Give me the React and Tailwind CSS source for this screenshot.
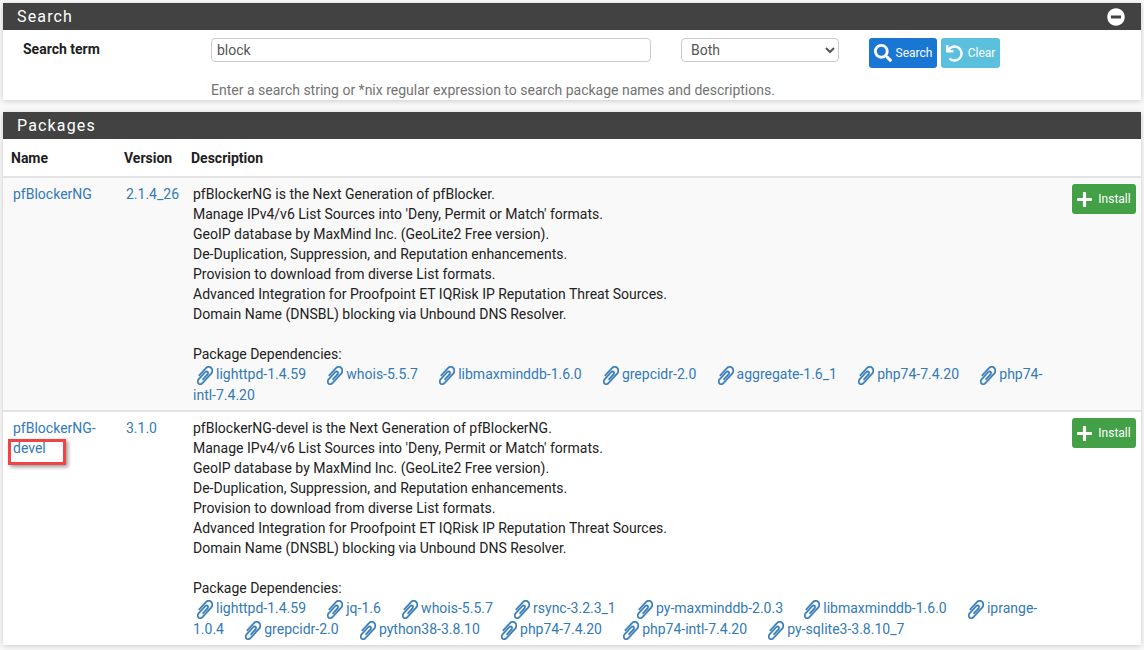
import { Fragment } from 'react';
import { FaMinusCircle, FaPlus, FaSearch, FaUndo } from 'react-icons/fa';

const descLines = (name, next) => [
  `${name} is the Next Generation of ${next}.`,
  "Manage IPv4/v6 List Sources into 'Deny, Permit or Match' formats.",
  'GeoIP database by MaxMind Inc. (GeoLite2 Free version).',
  'De-Duplication, Suppression, and Reputation enhancements.',
  'Provision to download from diverse List formats.',
  'Advanced Integration for Proofpoint ET IQRisk IP Reputation Threat Sources.',
  'Domain Name (DNSBL) blocking via Unbound DNS Resolver.',
];

const packages = [
  {
    name: 'pfBlockerNG',
    version: '2.1.4_26',
    desc: descLines('pfBlockerNG', 'pfBlocker'),
    deps: ['lighttpd-1.4.59', 'whois-5.5.7', 'libmaxminddb-1.6.0', 'grepcidr-2.0', 'aggregate-1.6_1', 'php74-7.4.20', 'php74-intl-7.4.20'],
    bg: 'bg-[#f9f9f9]',
  },
  {
    name: 'pfBlockerNG-devel',
    version: '3.1.0',
    desc: descLines('pfBlockerNG-devel', 'pfBlockerNG'),
    deps: ['lighttpd-1.4.59', 'jq-1.6', 'whois-5.5.7', 'rsync-3.2.3_1', 'py-maxminddb-2.0.3', 'libmaxminddb-1.6.0', 'iprange-1.0.4', 'grepcidr-2.0', 'python38-3.8.10', 'php74-7.4.20', 'php74-intl-7.4.20', 'py-sqlite3-3.8.10_7'],
    bg: 'bg-white',
  },
];

function Paperclip() {
  return (
    <svg viewBox="204 132 1392 1528" preserveAspectRatio="none" fill="currentColor" stroke="currentColor" strokeWidth="30" className="mb-[-1px] ml-[4px] mr-[3px] inline h-[19px] w-[16px] -scale-x-100">
      <path d="M1596 1385q0 117-79 196t-196 79q-135 0-235-100l-777-776q-113-115-113-271 0-159 110-270t269-111q158 0 273 113l605 606q10 10 10 22 0 16-30.5 46.5t-46.5 30.5q-13 0-23-10l-606-607q-79-77-181-77-106 0-179 75t-73 181q0 105 76 181l776 777q63 63 145 63 64 0 106-42t42-106q0-82-63-145l-581-581q-26-24-60-24-29 0-48 19t-19 48q0 32 25 59l410 410q10 10 10 22 0 16-31 47t-47 31q-12 0-22-10l-410-410q-63-61-63-149 0-82 57-139t139-57q88 0 149 63l581 581q100 98 100 235z" />
    </svg>
  );
}

function PanelHeading({ title, children }) {
  return (
    <div className="flex h-[27px] items-center justify-between bg-[#424242] pl-[14px] pr-[16px] text-[16px] leading-[27px] tracking-[1.15px] text-white">
      <span>{title}</span>
      {children}
    </div>
  );
}

function PackageRow({ pkg }) {
  return (
    <tr className={`${pkg.bg} border-b-2 border-[#e3e3e3] align-top last:border-b-0`}>
      <td className="pt-[6px] pl-[10px] pr-[8px]">
        <a className="text-[#337ab7]">{pkg.name}</a>
      </td>
      <td className="pt-[6px] pl-[2px]">
        <a className="text-[#337ab7]">{pkg.version}</a>
      </td>
      <td className="pt-[6px] pl-[2px] pr-[10px] pb-[4px]">
        {pkg.desc.map((line) => (
          <div key={line}>{line}</div>
        ))}
        <div className="mt-[20px]">Package Dependencies:</div>
        <div className="leading-[21px]">
          {pkg.deps.map((dep) => (
            <Fragment key={dep}>
              <a className="mr-[13.75px] text-[#337ab7]">
                <Paperclip />
                {dep}
              </a>{' '}
            </Fragment>
          ))}
        </div>
      </td>
      <td className="pt-[6px] pr-[5px]">
        <button className="ml-auto flex h-[30px] w-[64px] items-center justify-center gap-[5px] rounded-[3px] bg-[#43a047] pr-[1px] text-[12px] text-white">
          <FaPlus className="h-[17px] w-[17px]" />
          Install
        </button>
      </td>
    </tr>
  );
}

export default function App() {
  return (
    <div className="relative h-[650px] overflow-hidden bg-[#fafafa] px-[3px] pt-[3px] font-['Roboto',sans-serif] text-[14px] leading-[20px] text-[#212121]">
      <section className="h-[97px] bg-white shadow-[0_1px_6px_rgba(0,0,0,0.2)]">
        <PanelHeading title="Search">
          <FaMinusCircle className="h-[18px] w-[18px]" />
        </PanelHeading>
        <div className="flex items-start pt-[8px]">
          <label className="ml-[20px] w-[188px] pt-[1px] font-bold">Search term</label>
          <div className="w-[440px]">
            <input
              readOnly
              value="block"
              className="h-[24px] w-full rounded-[4px] border border-[#cccccc] px-[5px] text-[#555555]"
            />
            <p className="mt-[18px] w-[600px] text-[#737373]">
              Enter a search string or *nix regular expression to search package names and descriptions.
            </p>
          </div>
          <select className="ml-[30px] h-[24px] w-[158px] rounded-[4px] border border-[#cccccc] bg-white pl-[5px] text-[#555555]">
            <option>Both</option>
          </select>
          <button className="ml-[30px] flex h-[30px] w-[68px] items-center justify-center gap-[4px] rounded-[3px] bg-[#1976d2] text-[12px] text-white">
            <FaSearch className="h-[18px] w-[18px]" />
            Search
          </button>
          <button className="ml-[4px] flex h-[30px] w-[59px] items-center justify-center gap-[5px] rounded-[3px] bg-[#5bc0de] text-[12px] text-white">
            <FaUndo className="h-[17px] w-[17px]" />
            Clear
          </button>
        </div>
      </section>

      <section className="mt-[12px] h-[533px] bg-white shadow-[0_1px_6px_rgba(0,0,0,0.2)]">
        <PanelHeading title="Packages" />
        <table className="w-full table-fixed border-collapse">
          <thead>
            <tr className="h-[38px] border-b-2 border-[#e3e3e3] text-left">
              <th className="w-[121px] pl-[8px] font-bold">Name</th>
              <th className="w-[67px] font-bold">Version</th>
              <th className="font-bold">Description</th>
              <th className="w-[78px]"></th>
            </tr>
          </thead>
          <tbody>
            {packages.map((pkg) => (
              <PackageRow key={pkg.name} pkg={pkg} />
            ))}
          </tbody>
        </table>
      </section>

      {/* red annotation box from the screenshot */}
      <div className="absolute left-[8px] top-[439px] h-[26px] w-[58px] border-[3px] border-[#f04444] shadow-[2px_2px_4px_rgba(0,0,0,0.4)]"></div>
    </div>
  );
}
